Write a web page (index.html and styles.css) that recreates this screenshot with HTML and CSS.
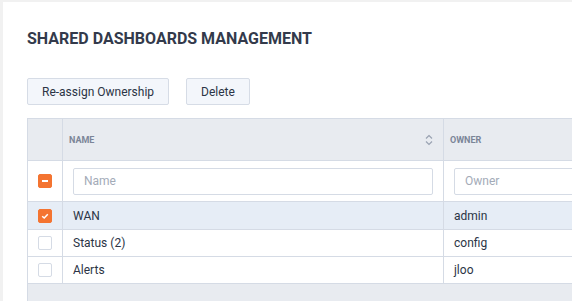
FILE: index.html
```html
<!DOCTYPE html>
<html lang="en">
<head>
    <meta charset="UTF-8">
    <meta name="viewport" content="width=device-width, initial-scale=1.0">
    <title>Shared Dashboards Management</title>
    <link rel="stylesheet" href="styles.css">
</head>
<body>
    <div class="card">
        <h1 class="title">SHARED DASHBOARDS MANAGEMENT</h1>

        <div class="toolbar">
            <button class="btn">Re-assign Ownership</button>
            <button class="btn">Delete</button>
        </div>

        <table class="grid">
            <thead>
                <tr class="head-row">
                    <th class="col-check"></th>
                    <th class="col-name">
                        <div class="th-inner">
                            <span>NAME</span>
                            <svg class="sort-icon" width="8" height="12" viewBox="0 0 8 12">
                                <path d="M1 4.5 L4 1.5 L7 4.5" fill="none" stroke="#9aa3b2" stroke-width="1.2"/>
                                <path d="M1 7.5 L4 10.5 L7 7.5" fill="none" stroke="#9aa3b2" stroke-width="1.2"/>
                            </svg>
                        </div>
                    </th>
                    <th class="col-owner">OWNER</th>
                </tr>
                <tr class="filter-row">
                    <td class="col-check"><span class="box box-partial"></span></td>
                    <td><input type="text" class="filter" placeholder="Name"></td>
                    <td><input type="text" class="filter" placeholder="Owner"></td>
                </tr>
            </thead>
            <tbody>
                <tr class="row selected">
                    <td class="col-check">
                        <span class="box box-checked">
                            <svg width="8" height="8" viewBox="0 0 8 8">
                                <path d="M1.2 4.2 L3.2 6 L6.8 2.2" fill="none" stroke="#fff" stroke-width="1.5"/>
                            </svg>
                        </span>
                    </td>
                    <td>WAN</td>
                    <td>admin</td>
                </tr>
                <tr class="row">
                    <td class="col-check"><span class="box"></span></td>
                    <td>Status (2)</td>
                    <td>config</td>
                </tr>
                <tr class="row">
                    <td class="col-check"><span class="box"></span></td>
                    <td>Alerts</td>
                    <td>jloo</td>
                </tr>
            </tbody>
        </table>
        <div class="grid-footer"></div>
    </div>
</body>
</html>
```

FILE: styles.css
```css
html, body {
    margin: 0;
    overflow: hidden;
}
body {
    font-family: Roboto, "Liberation Sans", Arial, sans-serif;
    background-color: #f1f1f1;
    color: #2b3445;
    padding: 2px 0 0 3px;
}
.card {
    background-color: #fff;
    width: 760px;
    height: 320px;
    padding: 27px 24px 0 24px;
    box-sizing: border-box;
}
.title {
    margin: 0;
    font-size: 16px;
    line-height: 19px;
    font-weight: 700;
    color: #333a4b;
}
.toolbar {
    display: flex;
    gap: 17px;
    margin-top: 30px;
}
.btn {
    font-family: inherit;
    font-size: 12px;
    color: #2b3445;
    background-color: #f3f6fb;
    border: 1px solid #d6dce6;
    border-radius: 2px;
    height: 27px;
    padding: 0 14px;
    cursor: pointer;
}
.grid {
    margin-top: 13px;
    border-collapse: collapse;
    width: 700px;
    font-size: 12px;
    table-layout: fixed;
}
.grid th, .grid td {
    border: 1px solid #d5dbe5;
    padding: 0 10px;
    text-align: left;
}
.col-check {
    width: 14px;
    text-align: center;
}
.grid .col-check {
    padding: 0 10px;
}
.col-name {
    width: 368px;
}
.head-row th {
    background-color: #e8ebf0;
    height: 41px;
    font-size: 9px;
    font-weight: 700;
    color: #7b8598;
    padding: 0 6px;
}
.th-inner {
    display: flex;
    align-items: center;
    justify-content: space-between;
}
.sort-icon {
    margin-right: 4px;
}
.filter-row td {
    height: 40px;
    padding: 0 10px;
}
.filter {
    display: block;
    width: 100%;
    height: 27px;
    box-sizing: border-box;
    border: 1px solid #d5dbe5;
    border-radius: 2px;
    padding: 0 10px;
    font-family: inherit;
    font-size: 12px;
    color: #2b3445;
}
.filter::placeholder {
    color: #a3abb8;
}
.row td {
    height: 26px;
}
.row.selected td {
    height: 27px;
    background-color: #e6edf6;
}
.box {
    display: inline-block;
    vertical-align: middle;
    width: 12px;
    height: 12px;
    border: 1px solid #d5dbe5;
    border-radius: 2px;
    background-color: #fff;
    position: relative;
}
.box-partial, .box-checked {
    background-color: #f47431;
    border-color: #f47431;
}
.box-partial::after {
    content: "";
    position: absolute;
    left: 3px;
    top: 5px;
    width: 6px;
    height: 2px;
    background-color: #fff;
}
.box-checked svg {
    position: absolute;
    left: 2px;
    top: 2px;
}
.grid-footer {
    width: 700px;
    height: 40px;
    background-color: #e8ebf0;
    border-left: 1px solid #d5dbe5;
    box-sizing: border-box;
}
```
